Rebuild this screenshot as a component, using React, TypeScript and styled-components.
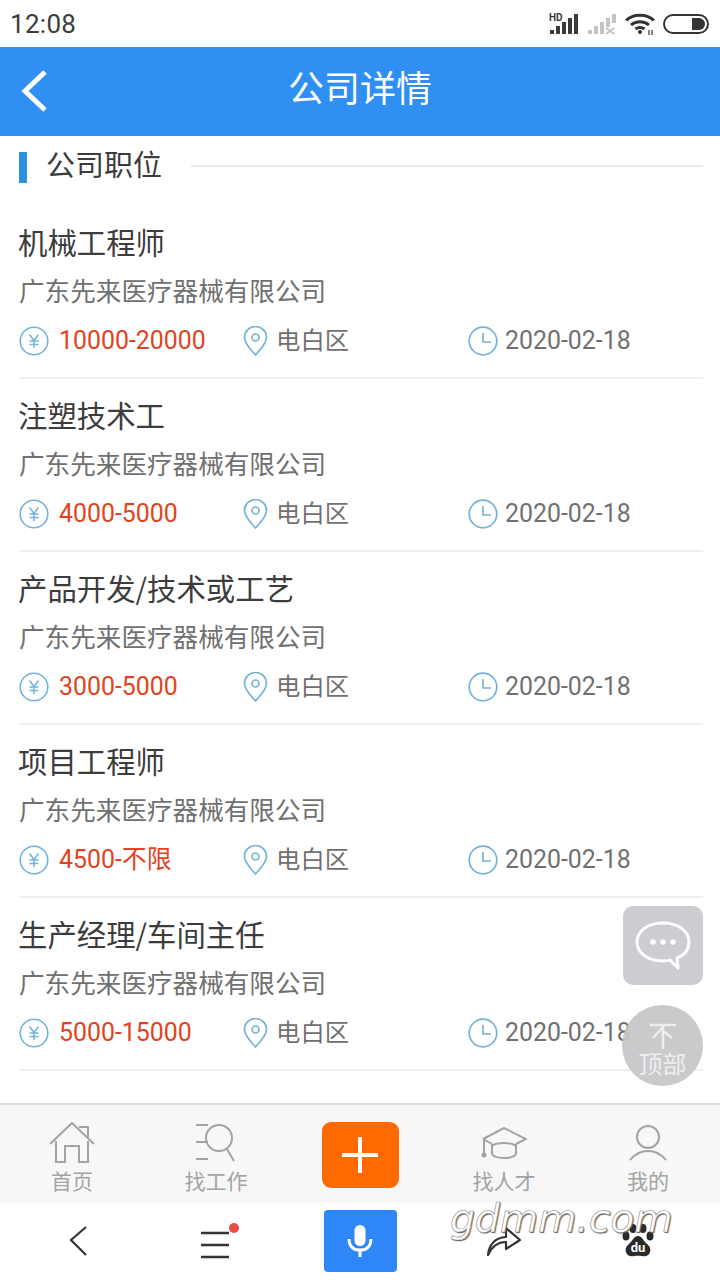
import React from 'react'
import styled, { createGlobalStyle } from 'styled-components'

const cjk = `"Noto Sans CJK SC", "Noto Sans", sans-serif`
const latin = `Roboto, "Noto Sans CJK SC", sans-serif`

const GlobalStyle = createGlobalStyle`
  html, body { margin: 0; padding: 0; background: #fff; }
  body { font-family: ${cjk}; }
`

const Page = styled.div`
  position: relative; width: 720px; height: 1280px; overflow: hidden;
  display: flex; flex-direction: column; background: #fff;
`

const StatusBar = styled.div`
  height: 47px; flex: none; display: flex; align-items: center; justify-content: space-between;
  padding: 0 11px 0 10px; box-sizing: border-box;
`
const Clock = styled.div` font: 400 26px/1 ${latin}; color: #3c3c3c; letter-spacing: .3px; `
const StatusIcons = styled.div` display: flex; align-items: center; gap: 8px; `

const Header = styled.header`
  height: 89px; flex: none; background: #2f8ff3; position: relative;
  display: flex; align-items: center; justify-content: center;
`
const HeaderTitle = styled.h1` margin: 0 0 11px; font: 400 36px/1 ${cjk}; color: #fff; `
const BackLink = styled.a` position: absolute; left: 20px; top: 22px; display: block; width: 28px; height: 44px; `

const SectionHead = styled.div`
  height: 70px; flex: none; display: flex; align-items: flex-start; padding: 14px 17px 0 19px; box-sizing: border-box;
`
const SectionMark = styled.div` width: 8px; height: 31px; margin-top: 2px; background: #2d92de; flex: none; `
const SectionTitle = styled.h2` margin: -2px 0 0 19px; font: 400 29px/31px ${cjk}; color: #3c3c3c; flex: none; width: 117px; white-space: nowrap; `
const SectionRule = styled.div` flex: 1; height: 2px; margin: 15px 0 0 28px; background: #e9e9e9; `

const JobList = styled.div` flex: 1; min-height: 0; `
const JobRow = styled.div`
  height: 173px; box-sizing: border-box; margin: 0 17px 0 19px; border-bottom: 2px solid #efefef;
  display: flex; flex-direction: column;
`
const JobTitle = styled.div` margin: 14px 0 0 -1px; font: 400 29.4px/42px ${cjk}; color: #3c3c3c; height: 42px; white-space: nowrap; `
const Company = styled.div` margin-top: 12px; font: 400 25.6px/32px ${cjk}; color: #707070; height: 32px; white-space: nowrap; `
const MetaGrid = styled.div` margin-top: 18px; display: grid; grid-template-columns: 224px 225px 1fr; height: 34px; `
const MetaCell = styled.div` display: flex; align-items: center; white-space: nowrap; `
const IconSlot = styled.span<{ $w: number }>` display: flex; width: ${p => p.$w}px; flex: none; `
const Salary = styled.span` font: 400 24.9px/1 ${latin}; color: #e2431d; `
const Place = styled.span` font: 400 24.4px/1 ${cjk}; color: #707070; margin: -4px 0 0 -1px; `
const DateText = styled.span` font: 400 24.9px/1 ${latin}; color: #707070; `

const TabBar = styled.nav`
  height: 100px; flex: none; box-sizing: border-box; border-top: 2px solid #dcdcdc; background: #f7f7f7;
  display: grid; grid-template-columns: repeat(5, 144px);
`
const Tab = styled.a`
  display: flex; flex-direction: column; align-items: center; padding-top: 16px; box-sizing: border-box; position: relative;
`
const TabIcon = styled.div` height: 44px; display: flex; align-items: center; justify-content: center; `
const TabLabel = styled.span` font: 400 21px/26px ${cjk}; color: #a3a3a3; margin-top: 2px; `
const AddButton = styled.div`
  width: 77px; height: 66px; margin-top: 1px; background: #ff6a00; border-radius: 9px;
  display: flex; align-items: center; justify-content: center;
`

const SystemNav = styled.div`
  height: 77px; flex: none; background: #fff; display: grid; grid-template-columns: repeat(5, 144px);
`
const NavCell = styled.div<{ $shift?: number }>`
  display: flex; align-items: center; justify-content: center; padding-bottom: 1px; box-sizing: border-box;
  ${p => (p.$shift && p.$shift > 0 ? `padding-left: ${p.$shift * 2}px;` : '')}
  ${p => (p.$shift && p.$shift < 0 ? `padding-right: ${-p.$shift * 2}px;` : '')}
`
const MicButton = styled.div`
  width: 73px; height: 62px; background: #2f86f6; border-radius: 4px;
  display: flex; align-items: center; justify-content: center;
`

const ChatFloat = styled.div`
  position: absolute; left: 623px; top: 906px; width: 80px; height: 79px; border-radius: 10px; background: #cbcdd0;
  display: flex; align-items: center; justify-content: center;
`
const TopFloat = styled.div`
  position: absolute; left: 622px; top: 1005px; width: 81px; height: 81px; border-radius: 50%;
  background: rgba(196, 197, 200, .92); display: flex; flex-direction: column; align-items: center; padding-top: 18px; box-sizing: border-box;
`
const TopLabel = styled.span` font: 400 24px/26px ${cjk}; color: #eeeeef; margin-top: 1px; `

const Watermark = styled.div`
  position: absolute; left: 450px; top: 1196px; font: italic 400 39.500px/44px "DejaVu Sans", sans-serif; letter-spacing: -.2px;
  color: #fff; -webkit-text-stroke: .6px #8a8a8a; text-shadow: 1px 1px 1px #555;
`

const jobs = [
  { title: '机械工程师', salary: '10000-20000' },
  { title: '注塑技术工', salary: '4000-5000' },
  { title: '产品开发/技术或工艺', salary: '3000-5000' },
  { title: '项目工程师', salary: '4500-不限' },
  { title: '生产经理/车间主任', salary: '5000-15000' },
]

const Signal = ({ faded }: { faded?: boolean }) => (
  <svg width="30" height="24" viewBox="0 0 30 24">
    <g fill={faded ? '#c4c4c4' : '#3a3a3a'}>
      <rect x="1" y="18" width="4" height="4" />
      <rect x="7" y="14" width="4" height="8" />
      <rect x="13" y="10" width="4" height="12" />
      <rect x="19" y="6" width="4" height={faded ? 9 : 16} />
      {!faded && <rect x="25" y="2" width="4" height="20" />}
      {faded && <rect x="25" y="2" width="4" height="9" />}
    </g>
    {faded && <path d="M19 16l8 6m0-6l-8 6" stroke="#c4c4c4" strokeWidth="2" />}
    {!faded && <text x="0" y="9" fontSize="10" fontWeight="700" fontFamily="Roboto, sans-serif" fill="#3a3a3a">HD</text>}
  </svg>
)

const Wifi = () => (
  <svg width="30" height="24" viewBox="0 0 30 24" fill="none" stroke="#333" strokeWidth="3">
    <path d="M1 8.500C8 1.500 22 1.500 29 8.500" />
    <path d="M6 13c5-4.500 13-4.500 18 0" />
    <path d="M10.500 17c2.500-2 6.500-2 9 0" />
    <circle cx="15" cy="20" r="2" fill="#333" stroke="none" />
    <path d="M24 18v5m3-5v5" strokeWidth="1.200" />
  </svg>
)

const Battery = () => (
  <svg width="46" height="22" viewBox="0 0 46 22">
    <rect x="1" y="2" width="44" height="18" rx="9" fill="none" stroke="#333" strokeWidth="2" />
    <path d="M29 5h7a6 6 0 0 1 0 12h-7z" fill="#333" />
  </svg>
)

const YuanIcon = () => (
  <svg width="30" height="30" viewBox="0 0 30 30" fill="none" stroke="#74b3d6" strokeWidth="1.600">
    <circle cx="15" cy="15" r="13.800" />
    <path d="M10.500 8.500L15 14.500l4.500-6M15 14.500V22M10.500 15h9M10.500 18.500h9" strokeWidth="1.500" />
  </svg>
)

const PinIcon = () => (
  <svg width="25" height="30" viewBox="0 0 25 30" fill="none" stroke="#74b3d6" strokeWidth="1.700">
    <path d="M12.500 29C8 23.500 1.500 18 1.500 11.500a11 11 0 0 1 22 0C23.500 18 17 23.500 12.500 29z" />
    <circle cx="12.500" cy="11.500" r="3.500" />
  </svg>
)

const ClockIcon = () => (
  <svg width="30" height="30" viewBox="0 0 30 30" fill="none" stroke="#74b3d6" strokeWidth="1.700">
    <circle cx="15" cy="15" r="13.800" />
    <path d="M15 7v9h8" />
  </svg>
)

const HomeIcon = () => (
  <svg width="46" height="42" viewBox="0 0 46 42" fill="none" stroke="#a3a3a3" strokeWidth="2">
    <path d="M1 22L23 1l22 21" />
    <path d="M30 5h9v10" />
    <path d="M7 19v21h9V24h14v16h9V19" />
  </svg>
)

const SearchIcon = () => (
  <svg width="42" height="40" viewBox="0 0 42 40" fill="none" stroke="#a3a3a3" strokeWidth="2">
    <path d="M1 2h12M1 19h12M1 36h12" />
    <circle cx="24" cy="15" r="13" />
    <path d="M32 26l7 12" />
  </svg>
)

const CapIcon = () => (
  <svg width="46" height="32" viewBox="0 0 46 32" fill="none" stroke="#a3a3a3" strokeWidth="2">
    <path d="M2 12L23 1l22 11-10 5" />
    <path d="M2 12l9 5" />
    <path d="M11 17v9c0 3 5 5 12 5s12-2 12-5v-9" />
    <path d="M11 19c4-4 20-4 24 0" />
    <path d="M3 13v15" />
    <circle cx="3" cy="28" r="1.500" fill="#a3a3a3" />
  </svg>
)

const UserIcon = () => (
  <svg width="38" height="37" viewBox="0 0 38 37" fill="none" stroke="#a3a3a3" strokeWidth="2">
    <circle cx="19" cy="12" r="11" />
    <path d="M1 35c5-6 11-9 18-9s13 3 18 9" />
  </svg>
)

export default function App() {
  return (
    <Page>
      <GlobalStyle />
      <StatusBar>
        <Clock>12:08</Clock>
        <StatusIcons>
          <Signal />
          <Signal faded />
          <Wifi />
          <Battery />
        </StatusIcons>
      </StatusBar>

      <Header>
        <BackLink>
          <svg width="28" height="44" viewBox="0 0 28 44" fill="none" stroke="#fff" strokeWidth="5">
            <path d="M25 3L5 22l20 19" />
          </svg>
        </BackLink>
        <HeaderTitle>公司详情</HeaderTitle>
      </Header>

      <SectionHead>
        <SectionMark />
        <SectionTitle>公司职位</SectionTitle>
        <SectionRule />
      </SectionHead>

      <JobList>
        {jobs.map(job => (
          <JobRow key={job.title}>
            <JobTitle>{job.title}</JobTitle>
            <Company>广东先来医疗器械有限公司</Company>
            <MetaGrid>
              <MetaCell>
                <IconSlot $w={40}><YuanIcon /></IconSlot>
                <Salary>{job.salary}</Salary>
              </MetaCell>
              <MetaCell>
                <IconSlot $w={34}><PinIcon /></IconSlot>
                <Place>电白区</Place>
              </MetaCell>
              <MetaCell>
                <IconSlot $w={37}><ClockIcon /></IconSlot>
                <DateText>2020-02-18</DateText>
              </MetaCell>
            </MetaGrid>
          </JobRow>
        ))}
      </JobList>

      <TabBar>
        <Tab>
          <TabIcon><HomeIcon /></TabIcon>
          <TabLabel>首页</TabLabel>
        </Tab>
        <Tab>
          <TabIcon><SearchIcon /></TabIcon>
          <TabLabel>找工作</TabLabel>
        </Tab>
        <Tab as="div">
          <AddButton>
            <svg width="36" height="36" viewBox="0 0 36 36" stroke="#fff" strokeWidth="4">
              <path d="M0 18h36M18 0v36" />
            </svg>
          </AddButton>
        </Tab>
        <Tab>
          <TabIcon><CapIcon /></TabIcon>
          <TabLabel>找人才</TabLabel>
        </Tab>
        <Tab>
          <TabIcon><UserIcon /></TabIcon>
          <TabLabel>我的</TabLabel>
        </Tab>
      </TabBar>

      <SystemNav>
        <NavCell $shift={6}>
          <svg width="20" height="32" viewBox="0 0 20 32" fill="none" stroke="#333" strokeWidth="2.200">
            <path d="M18 2L3 15l15 15" />
          </svg>
        </NavCell>
        <NavCell $shift={5}>
          <svg width="42" height="36" viewBox="0 0 42 36" fill="none">
            <path d="M1 10h28M1 22h28M1 34h28" stroke="#333" strokeWidth="2.400" />
            <circle cx="34" cy="5" r="5" fill="#ea4b45" />
          </svg>
        </NavCell>
        <NavCell>
          <MicButton>
            <svg width="26" height="34" viewBox="0 0 26 34" fill="none" stroke="#fff" strokeWidth="3">
              <rect x="7.500" y="1" width="11" height="21" rx="5.500" fill="#fff" stroke="none" />
              <path d="M2 15c0 8 5 11 11 11s11-3 11-11M13 26v7" />
            </svg>
          </MicButton>
        </NavCell>
        <NavCell>
          <svg width="36" height="32" viewBox="0 0 36 32" fill="none" stroke="#333" strokeWidth="2.200" strokeLinejoin="round">
            <path d="M2 30C3 20 8 13 20 12V3l14 12-14 9v-7C12 17 6 21 2 30z" />
          </svg>
        </NavCell>
        <NavCell $shift={-10}>
          <svg width="32" height="34" viewBox="0 0 32 34">
            <g fill="#2a2a2a">
              <ellipse cx="4" cy="12" rx="3.500" ry="4.500" />
              <ellipse cx="11" cy="4.500" rx="3.500" ry="4.500" />
              <ellipse cx="21" cy="4.500" rx="3.500" ry="4.500" />
              <ellipse cx="28" cy="12" rx="3.500" ry="4.500" />
              <path d="M16 12c4 0 5 4 8 7 4 3 5 6 4 9-1 4-5 5-8 4-3-.5-5-.5-8 0-3 1-7 0-8-4-1-3 0-6 4-9 3-3 4-7 8-7z" />
            </g>
            <text x="16" y="28" textAnchor="middle" fontSize="13" fontWeight="700" fontFamily="Roboto, sans-serif" fill="#fff">du</text>
          </svg>
        </NavCell>
      </SystemNav>

      <ChatFloat>
        <svg width="56" height="50" viewBox="0 0 56 50" fill="none">
          <path d="M28 2C13 2 2 10 2 21s11 19 26 19c3 0 5 0 7-1l8 8-1-10c8-3 12-9 12-16C54 10 43 2 28 2z" stroke="#fff" strokeWidth="3" strokeLinejoin="round" />
          <circle cx="18" cy="21" r="2.800" fill="#fff" />
          <circle cx="28" cy="21" r="2.800" fill="#fff" />
          <circle cx="38" cy="21" r="2.800" fill="#fff" />
        </svg>
      </ChatFloat>

      <TopFloat>
        <svg width="26" height="26" viewBox="0 0 26 26" fill="none" stroke="#eeeeef" strokeWidth="2.500">
          <path d="M0 2h26M13 2v24M13 4L3 15M13 8l9 7" />
        </svg>
        <TopLabel>顶部</TopLabel>
      </TopFloat>

      <Watermark>gdmm.com</Watermark>
    </Page>
  )
}
